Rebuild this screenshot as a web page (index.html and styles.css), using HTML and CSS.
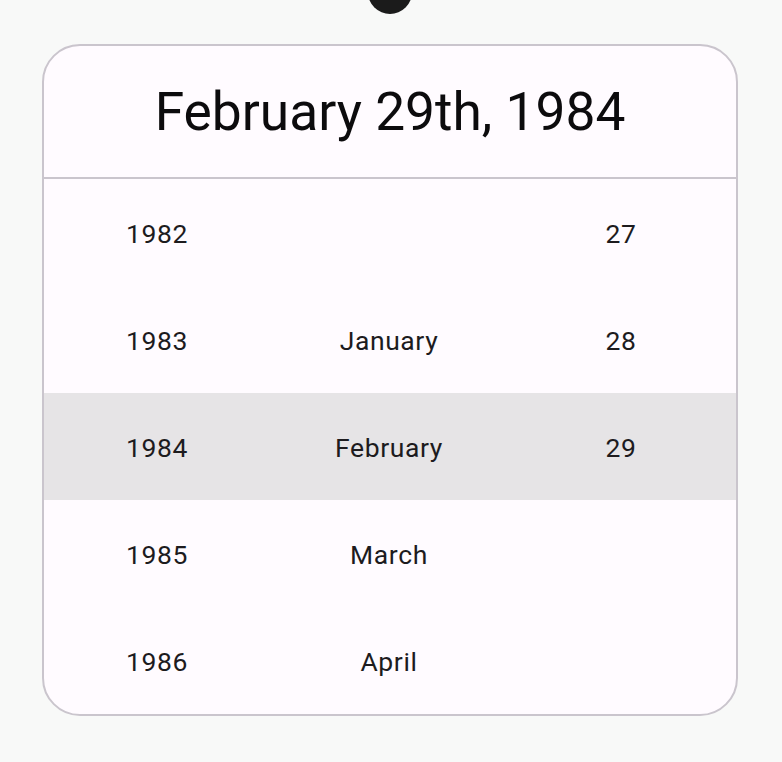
FILE: index.html
```html
<!DOCTYPE html>
<html>
<head>
<meta charset="utf-8">
<link rel="stylesheet" href="styles.css">
</head>
<body>
<div class="camera"></div>
<div class="card">
  <div class="header">February 29th, 1984</div>
  <div class="wheel">
    <div class="row"><span>1982</span><span></span><span>27</span></div>
    <div class="row"><span>1983</span><span>January</span><span>28</span></div>
    <div class="row selected"><span>1984</span><span>February</span><span>29</span></div>
    <div class="row"><span>1985</span><span>March</span><span></span></div>
    <div class="row"><span>1986</span><span>April</span><span></span></div>
  </div>
</div>
</body>
</html>
```

FILE: styles.css
```css
html, body {
  margin: 0;
  padding: 0;
  background: #f8f9f8;
  font-family: Roboto, "Noto Sans", sans-serif;
}
body {
  width: 782px;
  height: 762px;
  position: relative;
  overflow: hidden;
  padding-top: 44px;
  box-sizing: border-box;
}
.camera {
  position: absolute;
  left: 368px;
  top: -30px;
  width: 44px;
  height: 44px;
  border-radius: 50%;
  background: #1b1b1b;
}
.card {
  margin-left: 42px;
  width: 696px;
  height: 672px;
  box-sizing: border-box;
  border: 2px solid #cac5cd;
  border-radius: 38px;
  background: #fffbff;
  overflow: hidden;
  display: flex;
  flex-direction: column;
}
.header {
  height: 133px;
  flex-shrink: 0;
  border-bottom: 2px solid #cac5cd;
  display: flex;
  align-items: center;
  justify-content: center;
  font-size: 53.3px;
  color: #0c0b0d;
  padding-top: 1px;
  box-sizing: border-box;
}
.wheel {
  display: flex;
  flex-direction: column;
}
.row {
  height: 107px;
  flex-shrink: 0;
  display: grid;
  grid-template-columns: repeat(3, 232px);
  justify-content: center;
  align-items: center;
  font-size: 26.5px;
  letter-spacing: 0.6px;
  color: #1d1b1e;
  padding: 1px 2px 0 0;
  box-sizing: border-box;
}
.row span {
  text-align: center;
}
.row.selected {
  background: #e6e4e6;
}
```
